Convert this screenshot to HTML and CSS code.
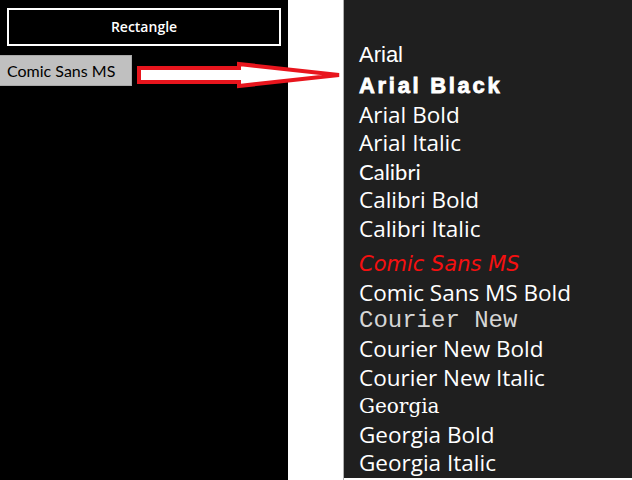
FILE: index.html
```html
<!doctype html>
<html lang="en">
<head>
  <meta charset="UTF-8">
  <title>Font picker</title>
  <link rel="stylesheet" href="styles.css">
</head>
<body>
  <div class="screen">
    <div class="phone">
      <div class="rect-btn">Rectangle</div>
      <div class="picked">Comic Sans MS</div>
    </div>
    <div class="gutter"></div>
    <ul class="fonts">
      <li class="f-arial">Arial</li>
      <li class="f-black">Arial Black</li>
      <li class="f-ui">Arial Bold</li>
      <li class="f-ui">Arial Italic</li>
      <li class="f-calibri">Calibri</li>
      <li class="f-ui">Calibri Bold</li>
      <li class="f-ui">Calibri Italic</li>
      <li class="f-comic">Comic Sans MS</li>
      <li class="f-ui">Comic Sans MS Bold</li>
      <li class="f-courier">Courier New</li>
      <li class="f-ui">Courier New Bold</li>
      <li class="f-ui">Courier New Italic</li>
      <li class="f-georgia">Georgia</li>
      <li class="f-ui">Georgia Bold</li>
      <li class="f-ui">Georgia Italic</li>
    </ul>
    <!-- callout arrow pointing from the picked item to the list -->
    <svg class="arrow" width="350" height="100" viewBox="0 0 350 100">
      <polygon points="139,68 239,68 239,64 339,75 239,86 239,82 139,82"
               fill="#fff" stroke="#e8151d" stroke-width="4" stroke-linejoin="miter"/>
    </svg>
  </div>
</body>
</html>
```

FILE: styles.css
```css
*{margin:0;
  padding:0;
  list-style:none;}
body{background:#fff;}
.screen{position:relative;
        display:flex;
        width:632px;
        height:480px;}
.phone{width:288px;
       height:480px;
       background:#000;
       padding-top:8px;
       box-sizing:border-box;}
.rect-btn{margin:0 7px 0 7px;
          height:38px;
          border:2px solid #fff;
          box-sizing:border-box;
          color:#fff;
          font:600 14px/34px "Open Sans", "Noto Sans", sans-serif;
          text-align:center;}
.picked{margin-top:9px;
        width:132px;
        height:31px;
        box-sizing:border-box;
        background:#c0c0c0;
        border:1px solid #a8a8a8;
        border-left:none;
        padding-left:7px;
        color:#000;
        font:16px/29px "Comic Sans MS", "Lato", sans-serif;}
.gutter{width:55px;
        border-right:1px solid #b0b0b0;}
.fonts{width:288px;
       height:478px;
       background:#1f1f1f;
       padding:41px 0 0 15px;
       box-sizing:border-box;
       color:#fff;}
.fonts li{height:28.45px;
          line-height:28.45px;
          white-space:nowrap;}
.f-arial{font:22px/28.45px "Liberation Sans", sans-serif;}
.f-black{font:bold 22px/28.45px "Liberation Sans", sans-serif;
         letter-spacing:2.7px;
         -webkit-text-stroke:0.8px #fff;
         margin-top:3px;}
.f-ui{font:22.5px/28.45px "Open Sans", "Noto Sans", sans-serif;}
.f-calibri{font:22px/28.45px "Lato", sans-serif;}
.fonts .f-comic{font:oblique 21px/28.45px "Comic Sans MS", "DejaVu Sans", sans-serif;
                color:#f51010;
                margin-top:7px;}
.f-courier{font:24px/28.45px "Liberation Mono", monospace;
           color:#d6d6d6;}
.f-georgia{font:20px/28.45px "DejaVu Serif", serif;}
.arrow{position:absolute;
       left:0;
       top:0;}
```
